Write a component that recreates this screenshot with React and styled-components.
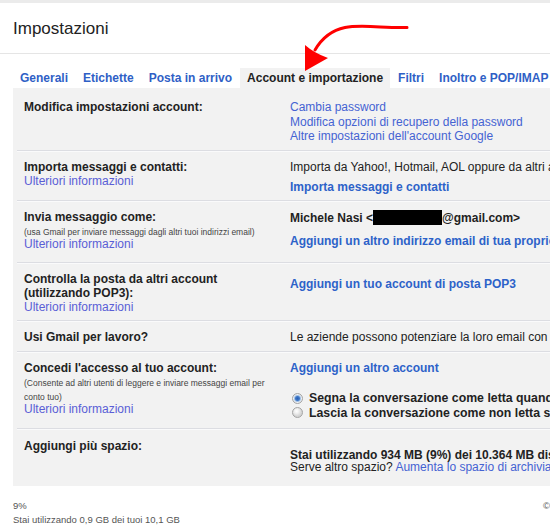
import React from "react";
import styled, { createGlobalStyle } from "styled-components";

const GlobalStyle = createGlobalStyle`
  html, body {
    margin: 0;
    padding: 0;
    background: #fff;
    overflow: hidden;
  }
  body {
    font-family: "Liberation Sans", Arial, sans-serif;
    color: #222;
  }
`;

const tabs = [
  "Generali",
  "Etichette",
  "Posta in arrivo",
  "Account e importazione",
  "Filtri",
  "Inoltro e POP/IMAP",
  "Chat",
];

function Radio({ checked, children }) {
  return (
    <RadioRow>
      <RadioDot $checked={checked} />
      {children}
    </RadioRow>
  );
}

function App() {
  return (
    <Page>
      <GlobalStyle />
      <Header>
        <Title>Impostazioni</Title>
      </Header>

      <TabBar>
        {tabs.map((t) => (
          <Tab key={t} $active={t === "Account e importazione"}>
            {t}
          </Tab>
        ))}
      </TabBar>

      <Panel>
        <Row>
          <Label>
            <Strong>Modifica impostazioni account:</Strong>
          </Label>
          <Value>
            <Link>Cambia password</Link>
            <Link>Modifica opzioni di recupero della password</Link>
            <Link>Altre impostazioni dell'account Google</Link>
          </Value>
        </Row>

        <Row>
          <Label>
            <Strong>Importa messaggi e contatti:</Strong>
            <More>Ulteriori informazioni</More>
          </Label>
          <Value>
            <Plain>Importa da Yahoo!, Hotmail, AOL oppure da altri account webmail o POP3.</Plain>
            <BoldLink $top={5.5}>Importa messaggi e contatti</BoldLink>
          </Value>
        </Row>

        <Row $pb={10}>
          <Label>
            <Strong>Invia messaggio come:</Strong>
            <Small>(usa Gmail per inviare messaggi dagli altri tuoi indirizzi email)</Small>
            <More $top={-2}>Ulteriori informazioni</More>
          </Label>
          <Value>
            <Plain $bold>
              Michele Nasi &lt;<Redacted />@gmail.com&gt;
            </Plain>
            <BoldLink $top={8}>Aggiungi un altro indirizzo email di tua proprietà</BoldLink>
          </Value>
        </Row>

        <Row>
          <Label>
            <Strong>Controlla la posta da altri account (utilizzando POP3):</Strong>
            <More>Ulteriori informazioni</More>
          </Label>
          <Value $pad={5}>
            <BoldLink>Aggiungi un tuo account di posta POP3</BoldLink>
          </Value>
        </Row>

        <Row>
          <Label>
            <Strong>Usi Gmail per lavoro?</Strong>
          </Label>
          <Value>
            <Plain>Le aziende possono potenziare la loro email con Google Apps.</Plain>
          </Value>
        </Row>

        <Row $pb={7.5}>
          <Label>
            <Strong>Concedi l'accesso al tuo account:</Strong>
            <Small>(Consente ad altri utenti di leggere e inviare messaggi email per conto tuo)</Small>
            <More $top={-2}>Ulteriori informazioni</More>
          </Label>
          <Value>
            <BoldLink>Aggiungi un altro account</BoldLink>
            <RadioGroup>
              <Radio checked>Segna la conversazione come letta quando viene aperta da altri</Radio>
              <Radio>Lascia la conversazione come non letta se viene aperta da altri</Radio>
            </RadioGroup>
          </Value>
        </Row>

        <Row $last $pt={10} $pb={11}>
          <Label>
            <Strong>Aggiungi più spazio:</Strong>
          </Label>
          <Value $pad={9}>
            <Plain $bold>Stai utilizzando 934 MB (9%) dei 10.364 MB disponibili.</Plain>
            <Plain $top={-2}>
              Serve altro spazio? <Link as="span">Aumenta lo spazio di archiviazione</Link>
            </Plain>
          </Value>
        </Row>
      </Panel>

      <Footer>
        <FooterLeft>
          <div>9%</div>
          <div>Stai utilizzando 0,9 GB dei tuoi 10,1 GB</div>
        </FooterLeft>
        <FooterRight>©2013 Google - Termini e privacy</FooterRight>
      </Footer>

      <Arrow width="550" height="90" viewBox="0 0 550 90">
        <path
          d="M407 27.5 C386 28.5 362 24 345 27.5 C333 30 322 38 315 50"
          fill="none"
          stroke="#f00"
          strokeWidth="3"
          strokeLinecap="round"
        />
        <path d="M305 71 L305 45 Q314 53 328 58 Z" fill="#f00" />
      </Arrow>
    </Page>
  );
}

const Page = styled.div`
  position: relative;
  width: 800px;
  min-height: 530px;
`;

const Header = styled.div`
  border-top: 3px solid #ebebeb;
  border-bottom: 1px solid #e5e5e5;
  height: 50px;
  display: flex;
  align-items: center;
  padding-left: 13px;
`;

const Title = styled.div`
  font-size: 17px;
  color: #222;
  margin-top: 1px;
`;

const TabBar = styled.div`
  display: flex;
  gap: 1px;
  margin-top: 14px;
  padding-left: 13px;
  white-space: nowrap;
`;

const Tab = styled.div`
  font-size: 12px;
  font-weight: bold;
  line-height: 20px;
  padding: 0 7px;
  color: ${(p) => (p.$active ? "#222" : "#2f5fc6")};
  background: ${(p) => (p.$active ? "#f2f2f2" : "transparent")};
`;

const Panel = styled.div`
  margin-left: 13px;
  background: #f2f2f2;
  padding: 3px 0 0 4px;
`;

const Row = styled.div`
  display: grid;
  grid-template-columns: 273px 1fr;
  padding-top: ${(p) => p.$pt ?? 9}px;
  padding-bottom: ${(p) => p.$pb ?? 6}px;
  border-bottom: ${(p) => (p.$last ? "none" : "1px solid #dcdde2")};
  box-shadow: ${(p) => (p.$last ? "none" : "0 1px 0 #fafafb")};
`;

const Label = styled.div`
  padding: 0 12px 0 7px;
  display: flex;
  flex-direction: column;
`;

const Strong = styled.div`
  font-size: 12px;
  font-weight: bold;
  line-height: 14px;
  color: #222;
`;

const Small = styled.div`
  font-size: 8.5px;
  line-height: 14px;
  margin-top: 1px;
  color: #444;
`;

const More = styled.div`
  font-size: 12px;
  line-height: 14.5px;
  color: #5a5ed6;
  margin-top: ${(p) => p.$top || 0}px;
`;

const Value = styled.div`
  display: flex;
  flex-direction: column;
  align-items: flex-start;
  white-space: nowrap;
  padding-top: ${(p) => p.$pad || 0}px;
`;

const Link = styled.div`
  font-size: 12px;
  line-height: 14.5px;
  color: #4563d2;
`;

const BoldLink = styled.div`
  font-size: 12px;
  font-weight: bold;
  line-height: 14.5px;
  color: #2d62c9;
  margin-top: ${(p) => p.$top || 0}px;
`;

const Plain = styled.div`
  font-size: 12px;
  line-height: 14.5px;
  font-weight: ${(p) => (p.$bold ? "bold" : "normal")};
  color: #222;
  margin-top: ${(p) => p.$top || 0}px;
`;

const Redacted = styled.span`
  display: inline-block;
  width: 69px;
  height: 15px;
  background: #000;
  vertical-align: -3px;
`;

const RadioGroup = styled.div`
  margin-top: 16px;
  margin-left: 2px;
`;

const RadioRow = styled.div`
  display: flex;
  align-items: center;
  font-size: 12.3px;
  font-weight: bold;
  line-height: 14.5px;
  color: #222;
`;

const RadioDot = styled.span`
  width: 9px;
  height: 9px;
  border-radius: 50%;
  border: 1px solid #a4a4a4;
  margin-right: 6px;
  flex: none;
  background: ${(p) =>
    p.$checked
      ? "radial-gradient(circle, #2b5fb3 0, #3f78c8 2px, #9fbfe4 3px, #eef2f7 4px, #d8dbe0 5px)"
      : "radial-gradient(circle at 40% 35%, #ffffff 0, #f2f2f2 2px, #d4d4d4 5px)"};
`;

const Footer = styled.div`
  display: flex;
  margin-left: 13px;
  padding-top: 13px;
  font-size: 9.5px;
  line-height: 14px;
  color: #555;
`;

const FooterLeft = styled.div`
  flex: 0 0 530px;
`;

const FooterRight = styled.div`
  white-space: nowrap;
`;

const Arrow = styled.svg`
  position: absolute;
  left: 0;
  top: 0;
  pointer-events: none;
`;

export default App;
